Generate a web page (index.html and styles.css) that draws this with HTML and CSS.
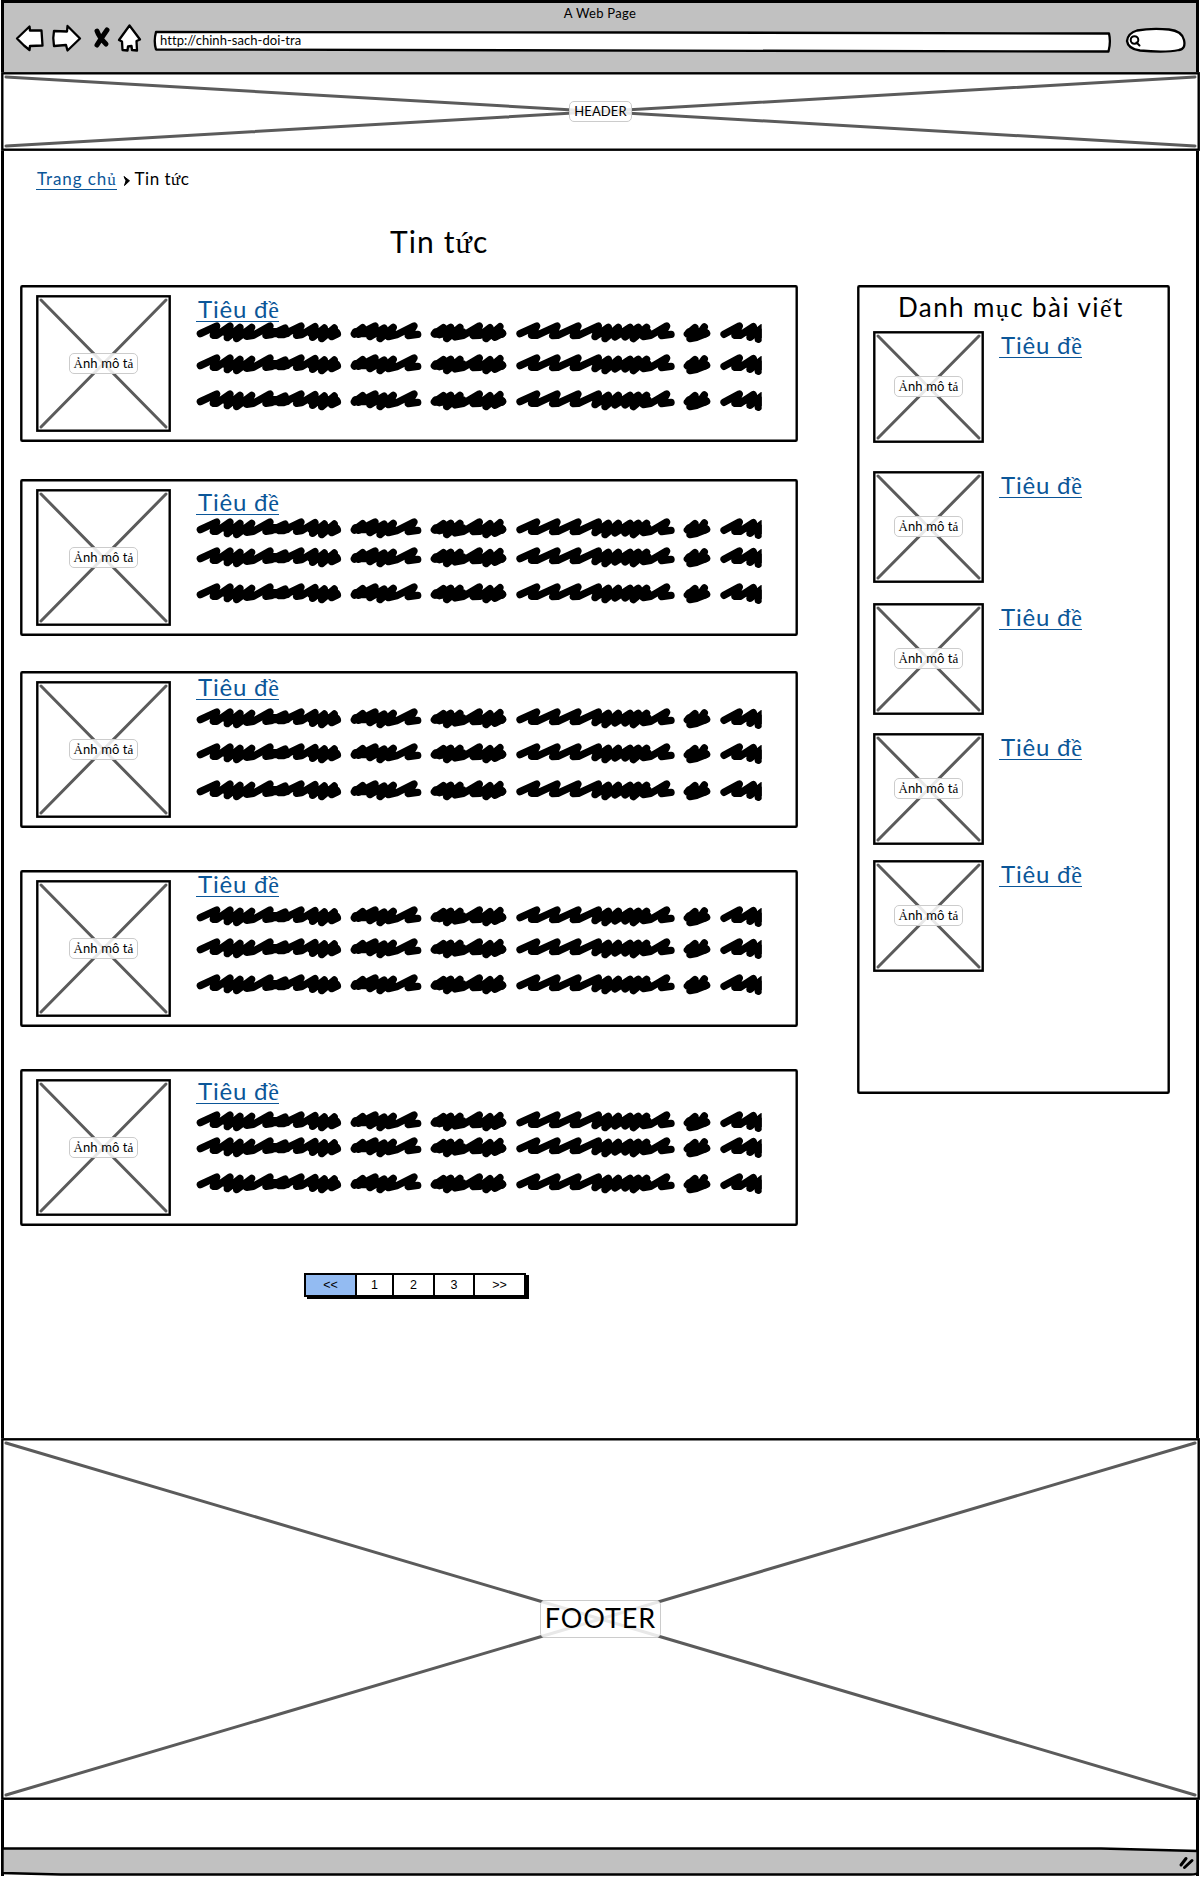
FILE: index.html
```html
<!DOCTYPE html>
<html lang="vi">
<head>
<meta charset="utf-8">
<title>Tin tức</title>
<link rel="stylesheet" href="styles.css">
</head>
<body>
<svg class="defs" width="0" height="0">
  <symbol id="scribble" viewBox="0 0 1715 63">
    <path d="M31 35L80 12L70 40L80 40L120 12L112 47L150 16L140 50L185 16L170 43L190 40L240 12L228 40L243 38L285 18L268 38L280 38L333 12L320 40L335 38L375 14L368 46L403 18L395 50L433 18L425 44L442 36"/>
    <path d="M493 36L518 17L506 37L555 12L540 44L582 18L570 50L610 16L595 44L620 38L672 12L655 41L683 37"/>
    <path d="M733 36L760 17L748 38L782 16L770 50L810 16L795 45L820 40L868 12L850 41L870 40L900 17L888 50L930 14L915 46L938 34"/>
    <path d="M990 35L1040 12L1025 40L1040 40L1101 12L1088 41L1103 40L1164 12L1150 41L1165 40L1225 12L1215 44L1255 16L1245 50L1285 16L1275 45L1320 16L1305 45L1345 16L1330 50L1370 16L1360 44L1382 40L1430 12L1415 41L1443 37"/>
    <path d="M1492 36L1515 17L1500 50L1520 46L1543 15L1525 44L1550 34"/>
    <path d="M1602 37L1648 12L1635 40L1650 40L1690 14L1680 46L1715 18L1705 52L1730 30"/>
    <path class="dense" d="M112 34H182M365 33H438M498 32H604M738 33H818M872 34H934M1222 32H1372M1498 33H1544M1682 34H1725M235 32H290"/>
  </symbol>
  <symbol id="cross" viewBox="0 0 100 100" preserveAspectRatio="none">
    <path d="M0 0L100 100M100 0L0 100"/>
  </symbol>
</svg>
<div class="window">
  <header class="toolbar">
    <div class="window-title">A Web Page</div>
    <div class="controls">
      <svg class="nav-icons" width="130" height="32" viewBox="0 0 130 32">
        <path d="M2 15.500L14.500 3.500L15 7.500L26.500 7.500L27.500 22.500L15 23L14.500 27L9 22.500Z"/>
        <path d="M39 8L52 8.500L52.500 3L65 15.500L52.500 27.500L51 22L39 23Q37.500 15 39 8Z"/>
        <path class="stop" d="M82 8Q84 14 91 21M92 7Q87 14 82 22"/>
        <path d="M114.500 2.500L125 16.500L121.500 18L122 27.500L117 27L116.500 23L113 23.500L112.500 27.500L107.500 27L107 18.500L104 17Z"/>
      </svg>
      <div class="address">
        <svg width="959" height="23" viewBox="0 0 959 23"><path d="M3 2L500 2.500L956 3.500Q958 12 955.500 21.500L3 19.500Q0.500 11 3 2Z"/></svg>
        <span>http://chinh-sach-doi-tra</span>
      </div>
      <svg class="search" width="62" height="27" viewBox="0 0 62 27">
        <path d="M12 3.500Q26 1 44 2.500Q57 4 59 13Q61 22 54 23Q40 26 15 23.500Q3 22 2 14Q3 6 12 3.500Z"/>
        <circle cx="9.500" cy="13" r="3.800"/><path d="M11.500 15.500L14.500 18.500"/>
      </svg>
    </div>
  </header>

  <section class="placeholder site-header">
    <svg class="outline"><rect/></svg><svg class="cross"><use href="#cross"/></svg>
    <span class="tag">HEADER</span>
  </section>

  <main>
    <nav class="crumbs"><a class="home">Trang ch<i>ủ</i></a><svg width="8" height="10" viewBox="0 0 8 10"><path d="M1 0.500L6.500 4.800L1.500 9.500L3 4.800Z" stroke="#000"/></svg><span>Tin t<i>ứ</i>c</span></nav>
    <h1>Tin t<i>ứ</i>c</h1>

    <div class="columns">
      <div class="news">
        <article class="card c1">
          <svg class="outline"><rect/></svg>
          <div class="placeholder thumb"><svg class="outline"><rect/></svg><svg class="cross"><use href="#cross"/></svg><span class="tag"><i>Ả</i>nh mô t<i>ả</i></span></div>
          <div class="text"><a class="title">Tiêu đ<i>ề</i></a><svg class="line"><use href="#scribble"/></svg><svg class="line"><use href="#scribble"/></svg><svg class="line"><use href="#scribble"/></svg></div>
        </article>
        <article class="card c2">
          <svg class="outline"><rect/></svg>
          <div class="placeholder thumb"><svg class="outline"><rect/></svg><svg class="cross"><use href="#cross"/></svg><span class="tag"><i>Ả</i>nh mô t<i>ả</i></span></div>
          <div class="text"><a class="title">Tiêu đ<i>ề</i></a><svg class="line"><use href="#scribble"/></svg><svg class="line"><use href="#scribble"/></svg><svg class="line"><use href="#scribble"/></svg></div>
        </article>
        <article class="card c3">
          <svg class="outline"><rect/></svg>
          <div class="placeholder thumb"><svg class="outline"><rect/></svg><svg class="cross"><use href="#cross"/></svg><span class="tag"><i>Ả</i>nh mô t<i>ả</i></span></div>
          <div class="text"><a class="title">Tiêu đ<i>ề</i></a><svg class="line"><use href="#scribble"/></svg><svg class="line"><use href="#scribble"/></svg><svg class="line"><use href="#scribble"/></svg></div>
        </article>
        <article class="card c4">
          <svg class="outline"><rect/></svg>
          <div class="placeholder thumb"><svg class="outline"><rect/></svg><svg class="cross"><use href="#cross"/></svg><span class="tag"><i>Ả</i>nh mô t<i>ả</i></span></div>
          <div class="text"><a class="title">Tiêu đ<i>ề</i></a><svg class="line"><use href="#scribble"/></svg><svg class="line"><use href="#scribble"/></svg><svg class="line"><use href="#scribble"/></svg></div>
        </article>
        <article class="card c5">
          <svg class="outline"><rect/></svg>
          <div class="placeholder thumb"><svg class="outline"><rect/></svg><svg class="cross"><use href="#cross"/></svg><span class="tag"><i>Ả</i>nh mô t<i>ả</i></span></div>
          <div class="text"><a class="title">Tiêu đ<i>ề</i></a><svg class="line"><use href="#scribble"/></svg><svg class="line"><use href="#scribble"/></svg><svg class="line"><use href="#scribble"/></svg></div>
        </article>
        <nav class="pager"><span class="prev">&lt;&lt;</span><span>1</span><span>2</span><span>3</span><span class="next">&gt;&gt;</span></nav>
      </div>

      <aside>
        <svg class="outline"><rect/></svg>
        <h2>Danh m<i>ụ</i>c bài vi<i>ế</i>t</h2>
        <div class="post p1"><div class="placeholder small"><svg class="outline"><rect/></svg><svg class="cross"><use href="#cross"/></svg><span class="tag"><i>Ả</i>nh mô t<i>ả</i></span></div><a class="title">Tiêu đ<i>ề</i></a></div>
        <div class="post p2"><div class="placeholder small"><svg class="outline"><rect/></svg><svg class="cross"><use href="#cross"/></svg><span class="tag"><i>Ả</i>nh mô t<i>ả</i></span></div><a class="title">Tiêu đ<i>ề</i></a></div>
        <div class="post p3"><div class="placeholder small"><svg class="outline"><rect/></svg><svg class="cross"><use href="#cross"/></svg><span class="tag"><i>Ả</i>nh mô t<i>ả</i></span></div><a class="title">Tiêu đ<i>ề</i></a></div>
        <div class="post p4"><div class="placeholder small"><svg class="outline"><rect/></svg><svg class="cross"><use href="#cross"/></svg><span class="tag"><i>Ả</i>nh mô t<i>ả</i></span></div><a class="title">Tiêu đ<i>ề</i></a></div>
        <div class="post p5"><div class="placeholder small"><svg class="outline"><rect/></svg><svg class="cross"><use href="#cross"/></svg><span class="tag"><i>Ả</i>nh mô t<i>ả</i></span></div><a class="title">Tiêu đ<i>ề</i></a></div>
      </aside>
    </div>
  </main>

  <footer class="placeholder site-footer">
    <svg class="outline"><rect/></svg><svg class="cross"><use href="#cross"/></svg>
    <span class="tag large">FOOTER</span>
  </footer>

  <svg class="statusbar" width="1198" height="29" viewBox="0 0 1198 29">
    <path class="bar" d="M1.500 1.500L1100 1.500L1196.500 4V25.500Q1196 27.500 1190 27.500L60 27.500L1.500 26Z"/>
    <path class="grip" d="M1180 18L1185 11.500M1183.500 20.500L1191 13.500"/>
  </svg>
</div>
</body>
</html>
```

FILE: styles.css
```css
* { box-sizing: border-box; }
body {
  height: 1877px;
  margin: 0;
  background: #fff;
  color: #000;
  font-family: Lato, "Liberation Sans", sans-serif;
}
i { font-family: "Liberation Serif", serif; font-style: normal; }
svg { display: block; flex: none; }
.defs { position: absolute; }
h1, h2 { margin: 0; font-weight: 400; }

.window {
  display: flex;
  flex-direction: column;
  width: 1198px;
  height: 1876px;
  margin: 0 1px;
  border: solid #000;
  border-width: 0 3px;
}

.toolbar {
  height: 72px;
  background: #c1c1c1;
  border-top: 3px solid #000;
}
.window-title {
  height: 20px;
  font-size: 13px;
  line-height: 21px;
  letter-spacing: 0.3px;
  text-align: center;
}
.controls {
  display: flex;
  align-items: flex-start;
  padding-left: 11px;
}
.controls path, .controls circle {
  fill: #fff;
  stroke: #000;
  stroke-width: 2.300;
  stroke-linejoin: round;
  stroke-linecap: round;
}
.controls .stop { fill: none; stroke-width: 5; }
.address {
  position: relative;
  width: 959px;
  height: 23px;
  margin: 7px 0 0 8px;
}
.address span {
  position: absolute;
  left: 7px;
  top: 1px;
  font-size: 13px;
  line-height: 18px;
  letter-spacing: 0.050px;
}
.search { margin: 4px 0 0 13px; }
.search circle, .search circle + path { stroke-width: 2; }

.outline, .cross {
  position: absolute;
  left: 0;
  top: 0;
  width: 100%;
  height: 100%;
}
.outline rect {
  x: 1.300px;
  y: 1.300px;
  width: calc(100% - 2.600px);
  height: calc(100% - 2.600px);
  fill: none;
  stroke: #000;
  stroke-width: 2.400;
}
.card > .outline rect, aside > .outline rect { rx: 1px; }
.cross {
  left: 5px;
  top: 5px;
  width: calc(100% - 10px);
  height: calc(100% - 10px);
  overflow: visible;
}
#cross { overflow: visible; }
#cross path {
  fill: none;
  stroke: #5b5b5b;
  stroke-width: 3;
  stroke-linecap: round;
  vector-effect: non-scaling-stroke;
}
.placeholder {
  position: relative;
  display: flex;
  flex: none;
  align-items: center;
  justify-content: center;
  background: #fff;
}
.tag {
  position: relative;
  height: 21px;
  padding: 0 4px;
  border: 1px solid #ccc;
  border-radius: 5px;
  background: rgba(255, 255, 255, 0.86);
  font-size: 13px;
  line-height: 18px;
  letter-spacing: 0.1px;
  white-space: nowrap;
}
.tag.large {
  height: 38px;
  font-size: 27px;
  line-height: 34px;
  letter-spacing: 0.9px;
}

.site-header { width: 1199px; height: 79px; margin-left: -3px; }

main { height: 1288px; }
.crumbs {
  display: flex;
  align-items: flex-start;
  padding: 17px 0 0 32px;
  height: 64px;
  font-size: 17px;
  line-height: 22px;
  letter-spacing: 0.5px;
}
.crumbs svg { margin: 8px 4px 0 6px; }
.home, .title { color: #0b5698; }
.home {
  height: 22px;
  padding-left: 1px;
  border-bottom: 1px solid #0b5698;
  letter-spacing: 0.9px;
}
h1 {
  width: 97px;
  height: 70px;
  margin-left: 386px;
  font-size: 30px;
  line-height: 52px;
  letter-spacing: 1.1px;
  white-space: nowrap;
}
.columns { display: flex; padding-left: 16px; }
.news { width: 778px; }
.card {
  position: relative;
  display: flex;
  align-items: flex-start;
  height: 157px;
}
.thumb { width: 135px; height: 137px; margin: 10px 0 0 16px; }
.text {
  display: flex;
  flex-direction: column;
  align-items: flex-start;
  padding-left: 19px;
}
.title {
  height: 27px;
  width: 83px;
  padding-left: 2px;
  border-bottom: 1px solid #0b5698;
  font-size: 24px;
  line-height: 27px;
  letter-spacing: 0.8px;
  white-space: nowrap;
}
.text .title { margin: var(--top) 0 0 6px; }
.line {
  width: 571.700px;
  height: 21px;
  fill: none;
  stroke: #000;
  stroke-width: 22;
  stroke-linejoin: round;
  stroke-linecap: round;
}
.dense { stroke-width: 28; }
.line:nth-child(2) { margin-top: var(--a); }
.line:nth-child(3) { margin-top: var(--b); }
.line:nth-child(4) { margin-top: var(--c); }
.c1 { --top: 10px; --a: 0px; --b: 11px; --c: 15px; }
.c2 { --top: 9px; --a: 3px; --b: 8px; --c: 15px; margin-top: 37px; }
.c3 { --top: 2px; --a: 8px; --b: 14px; --c: 16px; margin-top: 35px; }
.c4 { --top: 0px; --a: 9px; --b: 11px; --c: 15px; margin-top: 42px; }
.c5 { --top: 8px; --a: 7px; --b: 5px; --c: 15px; margin-top: 42px; }

.pager {
  display: flex;
  width: 222px;
  height: 24px;
  margin: 47px 0 0 284px;
  border: 2px solid #000;
  box-shadow: 3px 2px 0 #000;
  font-family: "Liberation Sans", sans-serif;
  font-size: 12.500px;
  line-height: 20px;
  text-align: center;
}
.pager span { width: 41px; border-right: 2px solid #000; }
.pager span:nth-child(2) { width: 37px; }
.pager span:nth-child(4) { width: 40px; }
.pager .prev { width: 51px; background: #93bbf2; }
.pager .next { flex: 1; border: 0; }

aside {
  position: relative;
  width: 313px;
  height: 809px;
  margin-left: 59px;
}
h2 {
  height: 46px;
  padding-left: 41px;
  font-size: 26px;
  line-height: 44px;
  letter-spacing: 1.4px;
  white-space: nowrap;
}
.post { display: flex; align-items: flex-start; padding-left: 16px; }
.small { width: 111px; height: 112px; }
.post .title { margin-left: 15px; }
.p2 { margin-top: 28px; }
.p3 { margin-top: 20px; }
.p4 { margin-top: 18px; }
.p5 { margin-top: 15px; }

.site-footer { width: 1199px; height: 362px; margin-left: -3px; }
.statusbar { margin: 47px 0 0 -3px; }
.bar { fill: #c1c1c1; stroke: #000; stroke-width: 2.400; }
.grip { fill: none; stroke: #000; stroke-width: 3; stroke-linecap: round; }
```
